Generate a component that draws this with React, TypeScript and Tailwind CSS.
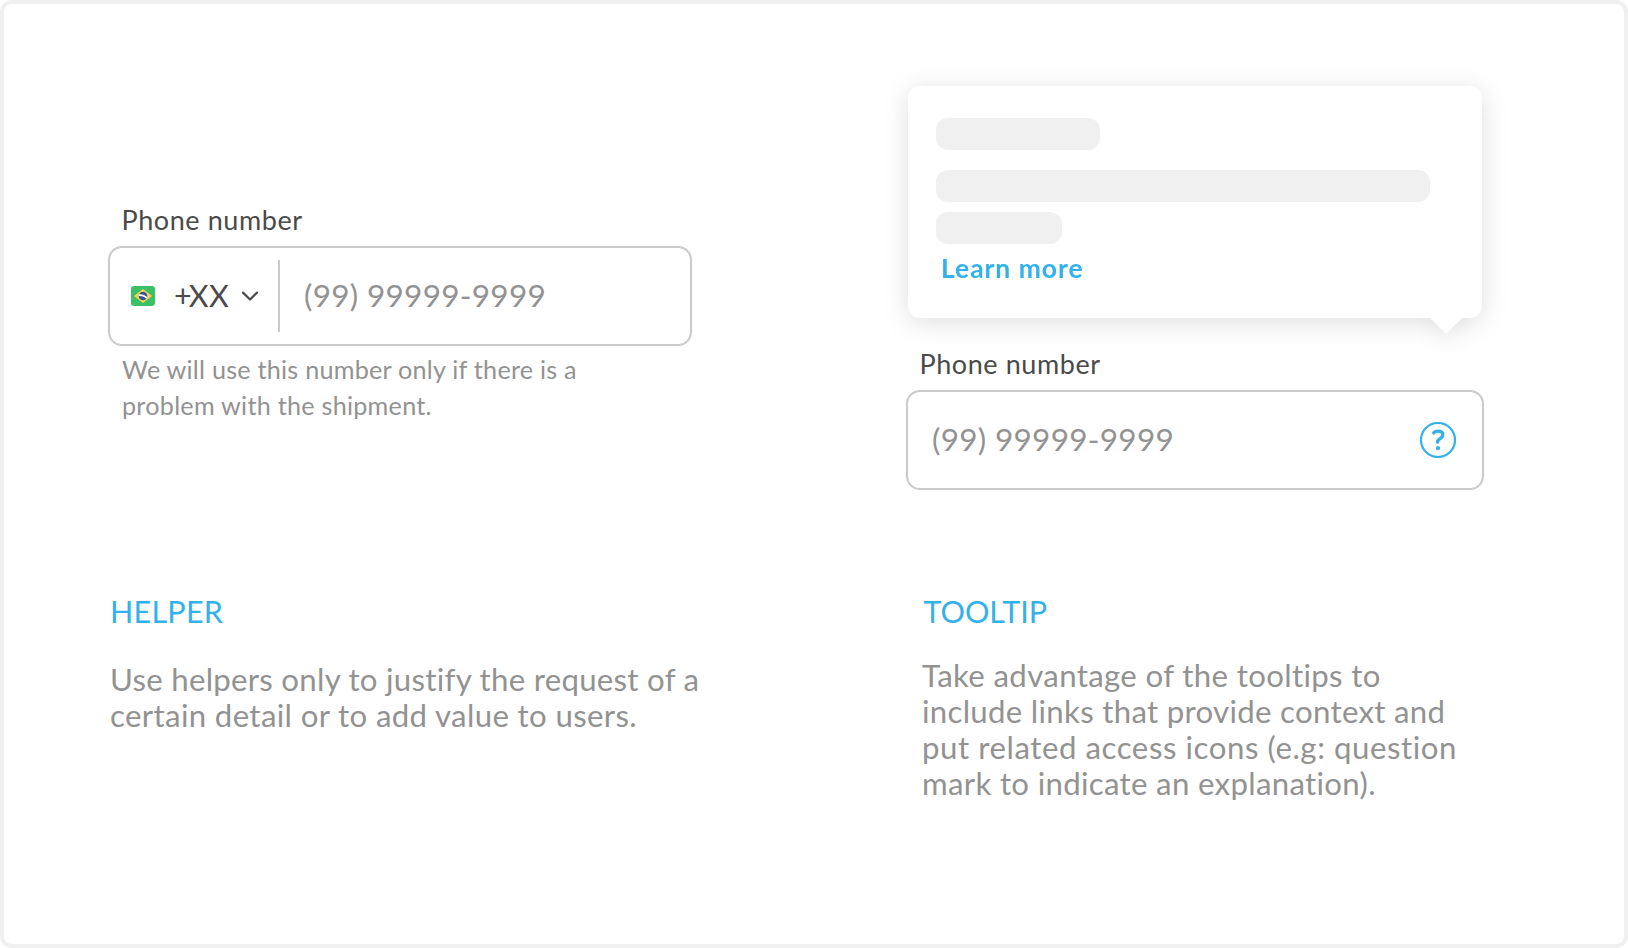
import type { ReactNode } from "react";

function Line({ className = "", children }: { className?: string; children: ReactNode }) {
  return <span className={`block whitespace-nowrap leading-9 ${className}`}>{children}</span>;
}

function BrazilFlag() {
  return (
    <svg width="24" height="20" viewBox="0 0 24 20" className="shrink-0">
      <rect width="24" height="20" rx="3.2" fill="#3bbf67" />
      <path d="M12 3 21 10l-9 7L3 10z" fill="#fbd647" />
      <circle cx="12" cy="10" r="4.3" fill="#3550a5" />
      <path d="M8 8.300c3-.5 6 .7 8.200 2.700l-.8 1.800c-2-2.200-4.600-3.100-7.600-2.800z" fill="#fff" />
    </svg>
  );
}

function ChevronDown() {
  return (
    <svg width="18" height="12" viewBox="0 0 18 12" fill="none" className="shrink-0">
      <path d="M2 2.600 9 9.500l7-6.900" stroke="#4a4a4a" strokeWidth="2.200" strokeLinecap="round" strokeLinejoin="round" />
    </svg>
  );
}

function QuestionIcon() {
  return (
    <svg width="36" height="36" viewBox="0 0 36 36" fill="none" className="shrink-0" stroke="#33b1ea">
      <circle cx="18" cy="18" r="17" strokeWidth="2.200" />
      <path
        d="M13.600 10.900c1-1.100 2.500-1.700 4.300-1.700 2.900 0 4.900 1.400 4.900 3.800 0 3.700-5.300 3.700-5.300 7.200"
        strokeWidth="3.300"
        strokeLinecap="round"
      />
      <circle cx="18" cy="26.100" r="2.200" fill="#33b1ea" stroke="none" />
    </svg>
  );
}

export default function App() {
  return (
    <main className="flex h-[948px] w-[1628px] rounded-xl border-4 border-[#f0f0f0] bg-white font-['Lato',sans-serif] text-[#929292]">
      <section className="flex w-[798px] flex-col pl-[104px] pt-[198px]">
        <label className="pl-[13.500px] text-[27px] text-[#4a4a4a]">
          <Line className="tracking-[0.570px]">Phone number</Line>
        </label>
        <div className="mt-2 flex h-[100px] w-[584px] items-center rounded-[14px] border-2 border-[#cacaca] pl-[21px]">
          <BrazilFlag />
          <span className="ml-[19px] flex h-9 w-[56px] -translate-y-px whitespace-nowrap text-[30.5px] leading-9 text-[#4a4a4a]">
            <span className="tracking-[-3px]">+</span>
            <span className="tracking-[0.500px]">XX</span>
          </span>
          <span className="ml-[11px] flex">
            <ChevronDown />
          </span>
          <span className="ml-[19px] h-[72px] w-0.5 bg-[#cacaca]" />
          <span className="ml-6 -translate-y-px whitespace-nowrap text-[31.5px] leading-9 tracking-[0.300px]">(99) 99999-9999</span>
        </div>
        <p className="mt-[5px] pl-[14px] text-[25.2px]">
          <Line className="tracking-[0.230px]">We will use this number only if there is a</Line>
          <Line className="tracking-[0.250px]">problem with the shipment.</Line>
        </p>
        <h2 className="mt-[170px] pl-[2px] text-[30.5px] text-[#33b1ea]">
          <Line className="tracking-[0.250px]">HELPER</Line>
        </h2>
        <p className="mt-8 pl-[2px] text-[31.2px]">
          <Line className="tracking-[0.275px]">Use helpers only to justify the request of a</Line>
          <Line className="tracking-[0.355px]">certain detail or to add value to users.</Line>
        </p>
      </section>

      <section className="flex flex-col pl-[100px] pt-[82px]">
        <div className="relative ml-[6px] flex h-[232px] w-[574px] flex-col rounded-xl bg-white pl-7 pt-8 drop-shadow-[0_4px_12px_rgba(0,0,0,0.13)]">
          <span className="h-8 w-[164px] rounded-xl bg-[#f0f0f0]" />
          <span className="mt-5 h-8 w-[494px] rounded-xl bg-[#f0f0f0]" />
          <span className="mt-2.5 h-8 w-[126px] rounded-xl bg-[#f0f0f0]" />
          <a className="mt-1.5 pl-[5px] text-[26.5px] font-bold text-[#33b1ea]">
            <Line className="tracking-[0.950px]">Learn more</Line>
          </a>
          <svg width="32" height="17" viewBox="0 0 32 17" className="absolute left-[522px] top-[231px]">
            <path d="M0 0v1l16 16L32 1V0z" fill="#fff" />
          </svg>
        </div>
        <label className="mt-7 pl-[17.500px] text-[27px] text-[#4a4a4a]">
          <Line className="tracking-[0.570px]">Phone number</Line>
        </label>
        <div className="ml-1 mt-2 flex h-[100px] w-[578px] items-center justify-between rounded-[14px] border-2 border-[#cacaca] pl-6 pr-[26px]">
          <span className="-translate-y-px whitespace-nowrap text-[31.5px] leading-9 tracking-[0.300px]">(99) 99999-9999</span>
          <QuestionIcon />
        </div>
        <h2 className="mt-[103px] pl-[21.500px] text-[30.5px] text-[#33b1ea]">
          <Line className="tracking-[0px]">TOOLTIP</Line>
        </h2>
        <p className="mt-7 pl-[20px] text-[31.2px]">
          <Line className="tracking-[0.350px]">Take advantage of the tooltips to</Line>
          <Line className="tracking-[0.300px]">include links that provide context and</Line>
          <Line className="tracking-[0.550px]">put related access icons (e.g: question</Line>
          <Line className="tracking-[0.320px]">mark to indicate an explanation).</Line>
        </p>
      </section>
    </main>
  );
}
